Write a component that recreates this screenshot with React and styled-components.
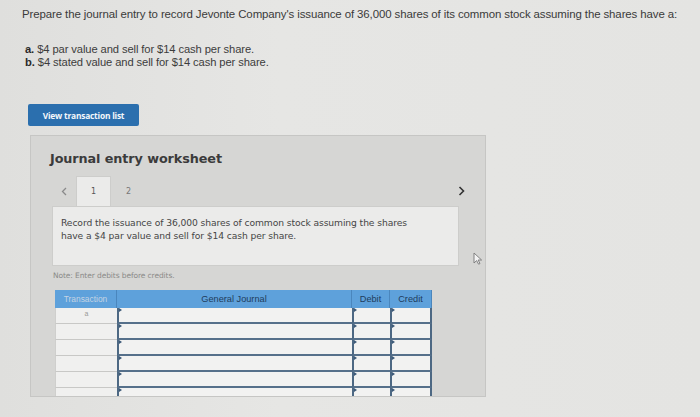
import React from 'react'
import styled, { createGlobalStyle } from 'styled-components'

const Global = createGlobalStyle`
body{
  margin:0;
  background:#e3e3e1;
}
`

const Page = styled.div`
position:relative;
width:700px;
height:417px;
overflow:hidden;
padding:8px 0 0 22px;
box-sizing:border-box;
background:linear-gradient(90deg,#dfdfdd 0%,#e6e6e4 40%,#e4e4e2 100%);
font-family:"Liberation Sans",Arial,sans-serif;
`

const Question = styled.p`
margin:0;
font-size:11.45px;
line-height:13px;
color:#3a3a3a;
letter-spacing:-0.1px;
white-space:nowrap;
`

const Parts = styled.ul`
list-style:none;
margin:22px 0 0 3px;
padding:0;
font-size:11.2px;
line-height:13px;
color:#3c3c3c;
letter-spacing:-0.1px;
`

const Part = styled.li`
b{ font-weight:700; color:#2a2a2a; }
`

const Button = styled.button`
display:block;
margin:35px 0 0 6px;
width:111px;
height:22px;
border:none;
border-radius:2px;
background:#2b6fae;
color:#f4f7fb;
font-family:"Open Sans","DejaVu Sans",sans-serif;
font-size:8.4px;
font-weight:700;
letter-spacing:-0.2px;
padding:0;
`

const Panel = styled.div`
margin:9px 0 0 8px;
width:456px;
height:262px;
overflow:hidden;
box-sizing:border-box;
background:#d6d6d4;
border:1px solid #c6c6c4;
padding:14px 0 0 21px;
font-family:"DejaVu Sans",Verdana,sans-serif;
`

const Heading = styled.h2`
margin:0 0 0 -2px;
font-size:12.8px;
font-weight:700;
color:#3b3b3b;
line-height:17px;
letter-spacing:-0.1px;
`

const TabRow = styled.div`
display:flex;
align-items:stretch;
height:30px;
margin-top:9px;
width:430px;
`

const Chevron = styled.span`
display:flex;
align-items:center;
justify-content:${p => p.align || 'center'};
width:${p => p.w}px;
`

const Tab = styled.div`
display:flex;
align-items:center;
justify-content:center;
width:35px;
font-size:8px;
color:${p => (p.active ? '#555' : '#777')};
background:${p => (p.active ? '#ebebea' : 'transparent')};
border:1px solid ${p => (p.active ? '#cdcdcb' : 'transparent')};
border-bottom:none;
box-sizing:border-box;
`

const Spacer = styled.div`
flex:1;
`

const Prompt = styled.div`
width:407px;
height:60px;
box-sizing:border-box;
background:#ebebea;
border:1px solid #cdcdcb;
padding:10px 48px 0 8px;
font-size:9.2px;
line-height:12.5px;
color:#454545;
letter-spacing:-0.1px;
`

const Note = styled.div`
margin:4px 0 0 1px;
font-size:7.5px;
line-height:11px;
color:#8a8a88;
letter-spacing:-0.1px;
`

const Grid = styled.div`
display:grid;
grid-template-columns:62px 235px 38px 42px;
grid-template-rows:18px repeat(6,16px);
margin:9px 0 0 3px;
width:377px;
`

const Head = styled.div`
background:#5ea1db;
border-right:1px solid #4a86bd;
display:flex;
align-items:center;
justify-content:center;
font-family:"Liberation Sans",Arial,sans-serif;
font-size:${p => (p.small ? 8.4 : 9.2)}px;
color:${p => (p.faint ? '#c4d4e4' : '#1f3c5c')};
&:last-child{ border-right:none; }
`

const TxCell = styled.div`
background:#f0f0ef;
border-bottom:1px solid #c8c8c6;
border-left:1px solid #cfcfcd;
display:flex;
justify-content:center;
padding-top:2px;
box-sizing:border-box;
font-family:"Liberation Sans",Arial,sans-serif;
font-size:7px;
color:#9a9a98;
`

const Input = styled.div`
position:relative;
background:#f2f2f1;
border-left:2px solid #4d6883;
border-bottom:2px solid #56708a;
box-sizing:border-box;
${p => (p.last ? 'border-right:2px solid #4d6883;' : '')}
&::before{
  content:'';
  position:absolute;
  top:0;
  left:0;
  border-top:2px solid transparent;
  border-bottom:2px solid transparent;
  border-left:3px solid #3d5a78;
}
`

const Cursor = styled.svg`
position:absolute;
left:473px;
top:252px;
`

const rows = ['a', '', '', '', '', '']

const App = () => {
  return (
    <Page>
      <Global />
      <Question>
        Prepare the journal entry to record Jevonte Company's issuance of 36,000 shares of its common stock assuming the shares have a:
      </Question>
      <Parts>
        <Part><b>a.</b> $4 par value and sell for $14 cash per share.</Part>
        <Part><b>b.</b> $4 stated value and sell for $14 cash per share.</Part>
      </Parts>
      <Button>View transaction list</Button>
      <Panel>
        <Heading>Journal entry worksheet</Heading>
        <TabRow>
          <Chevron w={24}>
            <svg width="6" height="9" viewBox="0 0 6 9">
              <path d="M5 1 L1.5 4.5 L5 8" fill="none" stroke="#8a8a8a" strokeWidth="1.3" />
            </svg>
          </Chevron>
          <Tab active>1</Tab>
          <Tab>2</Tab>
          <Spacer />
          <Chevron w={24} align="flex-start">
            <svg width="7" height="10" viewBox="0 0 7 10">
              <path d="M1.5 1 L5.5 5 L1.5 9" fill="none" stroke="#333" strokeWidth="1.6" />
            </svg>
          </Chevron>
        </TabRow>
        <Prompt>
          Record the issuance of 36,000 shares of common stock assuming the shares have a $4 par value and sell for $14 cash per share.
        </Prompt>
        <Note>Note: Enter debits before credits.</Note>
        <Grid>
          <Head faint small>Transaction</Head>
          <Head>General Journal</Head>
          <Head>Debit</Head>
          <Head>Credit</Head>
          {rows.map((r, i) => (
            <React.Fragment key={i}>
              <TxCell>{r}</TxCell>
              <Input />
              <Input />
              <Input last />
            </React.Fragment>
          ))}
        </Grid>
      </Panel>
      <Cursor width="10" height="13" viewBox="0 0 10 13">
        <path d="M1 1 L1 11 L3.6 8.6 L5.6 12.2 L7 11.5 L5.1 8 L8.6 8 Z" fill="#f4f4f4" stroke="#777" strokeWidth="0.9" strokeLinejoin="round" />
      </Cursor>
    </Page>
  )
}

export default App
